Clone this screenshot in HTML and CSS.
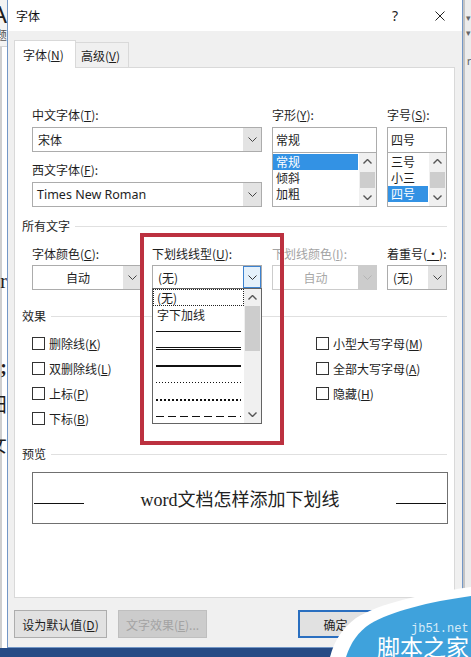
FILE: index.html
```html
<!DOCTYPE html>
<html lang="zh-CN">

<head>
  <meta charset="UTF-8">
  <meta name="viewport" content="width=device-width, initial-scale=1.0">
  <title>字体</title>
  <link rel="stylesheet" href="styles.css">
</head>

<body>
  <div class="screen">
    <div class="desk">
      <!-- strip of the Word document behind the dialog -->
      <div class="doc-edge">
        <div class="doc-ribbon">
          <span class="doc-char big">A</span>
          <span class="doc-char small">题</span>
        </div>
        <div class="doc-page">
          <span class="doc-char rr">r</span>
          <span class="doc-char semi">;</span>
          <span class="doc-char tian">田</span>
          <span class="doc-char nv">女</span>
        </div>
      </div>

      <div class="dialog">
        <div class="titlebar">
          <span class="title">字体</span>
          <span class="help">?</span>
          <svg class="close" width="10" height="10" viewBox="0 0 10 10">
            <path d="M0.5 0.5 L9.5 9.5 M9.5 0.5 L0.5 9.5" stroke="#222" stroke-width="1" fill="none" />
          </svg>
        </div>

        <div class="dialog-body">
          <div class="tabs">
            <div class="tab active">字体(<u>N</u>)</div>
            <div class="tab">高级(<u>V</u>)</div>
          </div>

          <div class="panel">
            <div class="font-grid">
              <div class="field">
                <label>中文字体(<u>T</u>):</label>
                <div class="combo">
                  <span class="combo-text">宋体</span>
                  <span class="combo-btn">
                    <svg width="9" height="5" viewBox="0 0 9 5"><path d="M0.5 0.5 L4.5 4.5 L8.5 0.5" stroke="#444" fill="none" /></svg>
                  </span>
                </div>
                <label class="second">西文字体(<u>F</u>):</label>
                <div class="combo">
                  <span class="combo-text latin">Times New Roman</span>
                  <span class="combo-btn">
                    <svg width="9" height="5" viewBox="0 0 9 5"><path d="M0.5 0.5 L4.5 4.5 L8.5 0.5" stroke="#444" fill="none" /></svg>
                  </span>
                </div>
              </div>

              <div class="field">
                <label>字形(<u>Y</u>):</label>
                <div class="textbox">常规</div>
                <div class="listbox">
                  <div class="list-items">
                    <div class="item selected">常规</div>
                    <div class="item">倾斜</div>
                    <div class="item">加粗</div>
                  </div>
                  <div class="vscroll">
                    <span class="sb-arrow"><svg width="9" height="5" viewBox="0 0 9 5"><path d="M0.5 4.5 L4.5 0.5 L8.5 4.5" stroke="#555" stroke-width="1.4" fill="none" /></svg></span>
                    <span class="sb-track"><span class="sb-thumb small"></span></span>
                    <span class="sb-arrow"><svg width="9" height="5" viewBox="0 0 9 5"><path d="M0.5 0.5 L4.5 4.5 L8.5 0.5" stroke="#555" stroke-width="1.4" fill="none" /></svg></span>
                  </div>
                </div>
              </div>

              <div class="field">
                <label>字号(<u>S</u>):</label>
                <div class="textbox">四号</div>
                <div class="listbox">
                  <div class="list-items">
                    <div class="item">三号</div>
                    <div class="item">小三</div>
                    <div class="item selected">四号</div>
                  </div>
                  <div class="vscroll">
                    <span class="sb-arrow"><svg width="9" height="5" viewBox="0 0 9 5"><path d="M0.5 4.5 L4.5 0.5 L8.5 4.5" stroke="#555" stroke-width="1.4" fill="none" /></svg></span>
                    <span class="sb-track"><span class="sb-thumb small"></span></span>
                    <span class="sb-arrow"><svg width="9" height="5" viewBox="0 0 9 5"><path d="M0.5 0.5 L4.5 4.5 L8.5 0.5" stroke="#555" stroke-width="1.4" fill="none" /></svg></span>
                  </div>
                </div>
              </div>
            </div>

            <div class="group-title">所有文字</div>
            <div class="text-grid">
              <div class="field">
                <label>字体颜色(<u>C</u>):</label>
                <div class="combo">
                  <span class="combo-text center">自动</span>
                  <span class="combo-btn">
                    <svg width="9" height="5" viewBox="0 0 9 5"><path d="M0.5 0.5 L4.5 4.5 L8.5 0.5" stroke="#444" fill="none" /></svg>
                  </span>
                </div>
              </div>

              <div class="field">
                <label>下划线线型(<u>U</u>):</label>
                <div class="combo-wrap">
                  <div class="combo open">
                    <span class="combo-text">(无)</span>
                    <span class="combo-btn hot">
                      <svg width="9" height="5" viewBox="0 0 9 5"><path d="M0.5 0.5 L4.5 4.5 L8.5 0.5" stroke="#333" fill="none" /></svg>
                    </span>
                  </div>
                  <div class="dropdown">
                    <div class="dropdown-items">
                      <div class="opt focus">(无)</div>
                      <div class="opt">字下加线</div>
                      <div class="opt"><i class="ul single"></i></div>
                      <div class="opt"><i class="ul double"></i></div>
                      <div class="opt"><i class="ul thick"></i></div>
                      <div class="opt"><i class="ul dotted"></i></div>
                      <div class="opt"><i class="ul dotted-heavy"></i></div>
                      <div class="opt"><i class="ul dashed"></i></div>
                    </div>
                    <div class="vscroll">
                      <span class="sb-arrow"><svg width="9" height="5" viewBox="0 0 9 5"><path d="M0.5 4.5 L4.5 0.5 L8.5 4.5" stroke="#555" stroke-width="1.4" fill="none" /></svg></span>
                      <span class="sb-track"><span class="sb-thumb tall"></span></span>
                      <span class="sb-arrow"><svg width="9" height="5" viewBox="0 0 9 5"><path d="M0.5 0.5 L4.5 4.5 L8.5 0.5" stroke="#555" stroke-width="1.4" fill="none" /></svg></span>
                    </div>
                  </div>
                </div>
              </div>

              <div class="field disabled">
                <label>下划线颜色(<u>I</u>):</label>
                <div class="combo">
                  <span class="combo-text center">自动</span>
                  <span class="combo-btn">
                    <svg width="9" height="5" viewBox="0 0 9 5"><path d="M0.5 0.5 L4.5 4.5 L8.5 0.5" stroke="#b4b4b4" fill="none" /></svg>
                  </span>
                </div>
              </div>

              <div class="field">
                <label>着重号(<u>·</u>):</label>
                <div class="combo">
                  <span class="combo-text">(无)</span>
                  <span class="combo-btn">
                    <svg width="9" height="5" viewBox="0 0 9 5"><path d="M0.5 0.5 L4.5 4.5 L8.5 0.5" stroke="#444" fill="none" /></svg>
                  </span>
                </div>
              </div>
            </div>

            <div class="group-title effects">效果</div>
            <div class="checks">
              <div class="check"><span class="box"></span>删除线(<u>K</u>)</div>
              <div class="check"><span class="box"></span>双删除线(<u>L</u>)</div>
              <div class="check"><span class="box"></span>上标(<u>P</u>)</div>
              <div class="check"><span class="box"></span>下标(<u>B</u>)</div>
              <div class="check"><span class="box"></span>小型大写字母(<u>M</u>)</div>
              <div class="check"><span class="box"></span>全部大写字母(<u>A</u>)</div>
              <div class="check"><span class="box"></span>隐藏(<u>H</u>)</div>
            </div>

            <div class="group-title preview-title">预览</div>
            <div class="preview">
              <span class="pv-line"></span>
              <span class="pv-text">word文档怎样添加下划线</span>
              <span class="pv-line"></span>
            </div>
          </div>

          <div class="buttons">
            <button class="btn default">设为默认值(<u>D</u>)</button>
            <button class="btn effect" disabled>文字效果(<u>E</u>)...</button>
            <button class="btn ok">确定</button>
            <button class="btn cancel">取消</button>
          </div>
        </div>
      </div>

      <div class="ribbon-edge">
        <span class="tick">▾</span>
        <span class="tick">▾</span>
        <span class="tick r">r</span>
      </div>
    </div>
    <div class="statusbar"></div>
  </div>

  <!-- red highlight drawn over the dialog -->
  <div class="highlight"></div>

  <svg class="watermark" width="141" height="72" viewBox="0 0 141 72">
    <path d="M0 72 C5 54 12 44 26 33 C50 18 92 9 141 2 L141 72 Z" fill="#ffffff" />
    <path d="M16 72 C21 57 28 47 40 39 C62 26 98 17 141 11 L141 72 Z" fill="#3fa2dc" />
    <text x="81" y="47" class="wm-net">jb51.net</text>
    <text x="47" y="71" class="wm-name">脚本之家</text>
  </svg>
</body>

</html>
```

FILE: styles.css
```css
* {
  box-sizing: border-box;
}

html,
body {
  margin: 0;
  padding: 0;
}

body {
  width: 471px;
  height: 657px;
  overflow: hidden;
  position: relative;
  font-family: "Noto Sans CJK SC", "Noto Sans", sans-serif;
  font-size: 12px;
  color: #1e1e1e;
  background: #fff;
}

u {
  text-decoration: underline;
  text-underline-offset: 1px;
}

.screen {
  display: flex;
  flex-direction: column;
  height: 657px;
}

.desk {
  display: flex;
  height: 648px;
}

.statusbar {
  height: 9px;
  background: #264b85;
}

/* document behind the dialog */
.doc-edge {
  width: 7px;
  display: flex;
  flex-direction: column;
  overflow: hidden;
}

.doc-ribbon {
  height: 47px;
  background: #f3f3f3;
  border-bottom: 1px solid #d4d4d4;
  display: flex;
  flex-direction: column;
}

.doc-page {
  flex: 1;
  background: #fff;
  border-left: 2px solid #cfcfcf;
  display: flex;
  flex-direction: column;
}

.doc-char {
  display: flex;
  justify-content: flex-end;
  font-family: "Liberation Serif", "Noto Sans CJK SC", serif;
  white-space: nowrap;
  line-height: 1;
}

.doc-char.big {
  font-family: "Liberation Sans", sans-serif;
  font-size: 24px;
  margin-top: 3px;
}

.doc-char.small {
  font-size: 12px;
  margin-top: 3px;
  color: #555;
}

.doc-char.rr {
  font-size: 20px;
  margin-top: 224px;
}

.doc-char.semi {
  font-size: 20px;
  font-weight: bold;
  margin-top: 66px;
}

.doc-char.tian {
  font-size: 20px;
  margin-top: 18px;
}

.doc-char.nv {
  font-size: 20px;
  margin-top: 20px;
}

.ribbon-edge {
  width: 8px;
  background: #ececec;
  border-left: 2px solid #c4c4c4;
  display: flex;
  flex-direction: column;
  align-items: flex-end;
  font-size: 9px;
  color: #666;
  line-height: 1;
}

.ribbon-edge .tick {
  margin-top: 13px;
}

.ribbon-edge .tick + .tick {
  margin-top: 6px;
}

.ribbon-edge .tick.r {
  margin-top: 18px;
  font-size: 11px;
}

/* dialog frame */
.dialog {
  width: 456px;
  display: flex;
  flex-direction: column;
  background: #f0f0f0;
  border-left: 1px solid #7397c6;
  border-right: 1px solid #7397c6;
  border-bottom: 1px solid #7397c6;
}

.titlebar {
  height: 31px;
  background: #fff;
  display: flex;
  align-items: center;
  padding-left: 8px;
}

.title {
  font-size: 12px;
  color: #111;
}

.help {
  margin-left: auto;
  font-family: "Noto Sans", sans-serif;
  font-size: 14px;
  color: #222;
}

.close {
  margin-left: 37px;
  margin-right: 17px;
}

.dialog-body {
  flex: 1;
  padding: 9px 7px 0 6px;
  display: flex;
  flex-direction: column;
}

.tabs {
  display: flex;
  align-items: flex-end;
  height: 27px;
}

.tab {
  height: 25px;
  display: flex;
  align-items: center;
  padding-left: 5px;
  width: 53px;
  border: 1px solid #d9d9d9;
  border-bottom: none;
  border-left: none;
  background: #f0f0f0;
}

.tab.active {
  height: 28px;
  width: 62px;
  padding-left: 8px;
  margin-bottom: -1px;
  background: #fff;
  border-left: 1px solid #d9d9d9;
  position: relative;
  z-index: 1;
}

.panel {
  height: 531px;
  background: #fff;
  border: 1px solid #d9d9d9;
  padding: 39px 7px 0 7px;
}

label {
  display: block;
  height: 16px;
  line-height: 16px;
  margin-bottom: 4px;
  white-space: nowrap;
}

label.second {
  margin-top: 10px;
}

.font-grid {
  display: grid;
  grid-template-columns: 230px 105px 60px;
  column-gap: 10px;
  margin-left: 10px;
}

.text-grid {
  display: grid;
  grid-template-columns: 110px 110px 105px 60px;
  column-gap: 10px;
  margin-left: 10px;
  margin-top: 12px;
}

.text-grid label {
  margin-bottom: 3px;
}

/* combo boxes */
.combo {
  height: 25px;
  display: flex;
  border: 1px solid #acacac;
  background: #fff;
}

.combo-text {
  flex: 1;
  line-height: 23px;
  padding-left: 5px;
  white-space: nowrap;
  overflow: hidden;
}

.combo-text.latin {
  font-family: "Noto Sans", sans-serif;
  font-size: 12.5px;
  padding-left: 4px;
}

.combo-text.center {
  text-align: center;
  padding-left: 0;
}

.combo-btn {
  width: 18px;
  background: #e3e3e3;
  display: flex;
  align-items: center;
  justify-content: center;
}

.combo-btn.hot {
  background: #e5f1fb;
  border: 1px solid #3d82cf;
}

.combo.open {
  height: 24px;
}

.field.disabled label {
  color: #a3a3a3;
}

.field.disabled .combo {
  border-color: #cccccc;
}

.field.disabled .combo-text {
  color: #a8a8a8;
}

.field.disabled .combo-btn {
  background: #cccccc;
}

/* text box + list */
.textbox {
  height: 26px;
  border: 1px solid #acacac;
  line-height: 24px;
  padding-left: 3px;
  background: #fff;
}

.listbox {
  height: 54px;
  border: 1px solid #acacac;
  border-top: none;
  display: flex;
  background: #fff;
}

.list-items {
  flex: 1;
  padding-top: 1px;
}

.item {
  height: 16px;
  line-height: 16px;
  padding-left: 3px;
  margin-right: 1px;
}

.item.selected {
  background: #3392e4;
  color: #fff;
}

.vscroll {
  width: 17px;
  background: #f0f0f0;
  display: flex;
  flex-direction: column;
}

.sb-arrow {
  height: 17px;
  display: flex;
  align-items: center;
  justify-content: center;
}

.sb-track {
  flex: 1;
  display: flex;
  flex-direction: column;
  padding: 0 1px;
}

.sb-thumb {
  background: #cdcdcd;
}

.sb-thumb.small {
  height: 16px;
  margin-top: 2px;
}

.sb-thumb.tall {
  height: 45px;
}

/* open underline list */
.combo-wrap {
  position: relative;
}

.dropdown {
  position: absolute;
  left: 0;
  top: 23px;
  width: 110px;
  height: 136px;
  border: 1px solid #646464;
  background: #fff;
  display: flex;
  z-index: 5;
}

.dropdown-items {
  width: 91px;
  overflow: hidden;
}

.opt {
  height: 17px;
  display: flex;
  align-items: center;
  padding-left: 4px;
  white-space: nowrap;
}

.opt.focus {
  outline: 1px dotted #222;
  outline-offset: -1px;
}

.ul {
  display: block;
  width: 85px;
  margin-left: -1px;
}

.ul.single {
  height: 1px;
  background: #111;
}

.ul.double {
  height: 3px;
  border-top: 1px solid #111;
  border-bottom: 1px solid #111;
}

.ul.thick {
  height: 2px;
  background: #111;
}

.ul.dotted {
  height: 1px;
  background: repeating-linear-gradient(to right, #111 0 1px, transparent 1px 3px);
}

.ul.dotted-heavy {
  height: 2px;
  background: repeating-linear-gradient(to right, #111 0 2px, transparent 2px 4px);
}

.ul.dashed {
  height: 1px;
  background: repeating-linear-gradient(to right, #111 0 8px, transparent 8px 12px);
}

.dropdown .vscroll {
  width: 17px;
}

/* group headings */
.group-title {
  display: flex;
  align-items: center;
  height: 16px;
  line-height: 16px;
  margin-top: 11px;
}

.group-title::after {
  content: "";
  flex: 1;
  height: 1px;
  background: #e0e0e0;
  margin-left: 5px;
}

.group-title.effects {
  margin-top: 18px;
}

.group-title.preview-title {
  margin-top: 15px;
}

/* effect checkboxes */
.checks {
  display: grid;
  grid-template-columns: 284px 1fr;
  grid-template-rows: repeat(4, 25px);
  grid-auto-flow: column;
  margin-left: 10px;
  margin-top: 7px;
}

.check {
  display: flex;
  align-items: center;
  white-space: nowrap;
}

.check .box {
  width: 13px;
  height: 13px;
  border: 1px solid #333;
  background: #fff;
  margin-right: 4px;
}

/* preview */
.preview {
  margin: 10px 0 0 10px;
  width: 416px;
  height: 52px;
  border: 1px solid #707070;
  display: flex;
  align-items: center;
  padding: 0 1px;
}

.pv-line {
  width: 50px;
  height: 1px;
  background: #111;
  margin-top: 10px;
}

.pv-text {
  flex: 1;
  text-align: center;
  font-family: "Liberation Serif", "Noto Sans CJK SC", serif;
  font-size: 18px;
  color: #222;
}

/* dialog buttons */
.buttons {
  display: flex;
  margin-top: 12px;
  height: 28px;
}

.btn {
  font-family: "Noto Sans CJK SC", "Noto Sans", sans-serif;
  font-size: 12px;
  color: #1e1e1e;
  height: 28px;
  padding: 0;
  background: #e1e1e1;
  border: 1px solid #adadad;
}

.btn.default {
  width: 93px;
}

.btn.effect {
  width: 89px;
  margin-left: 11px;
  background: #cccccc;
  border-color: #bfbfbf;
  color: #a3a3a3;
}

.btn.ok {
  width: 75px;
  margin-left: auto;
  border: 2px solid #2a6fc0;
}

.btn.cancel {
  width: 75px;
  margin-left: 7px;
}

/* overlays */
.highlight {
  position: absolute;
  left: 140px;
  top: 233px;
  width: 144px;
  height: 212px;
  border: 4px solid #bc3140;
  z-index: 10;
}

.watermark {
  position: absolute;
  left: 330px;
  top: 585px;
  z-index: 11;
}

.wm-net {
  font-family: "Liberation Mono", monospace;
  font-size: 12px;
  fill: #d6ebf8;
}

.wm-name {
  font-family: "Noto Sans CJK SC", sans-serif;
  font-size: 23px;
  fill: #ffffff;
}
```
